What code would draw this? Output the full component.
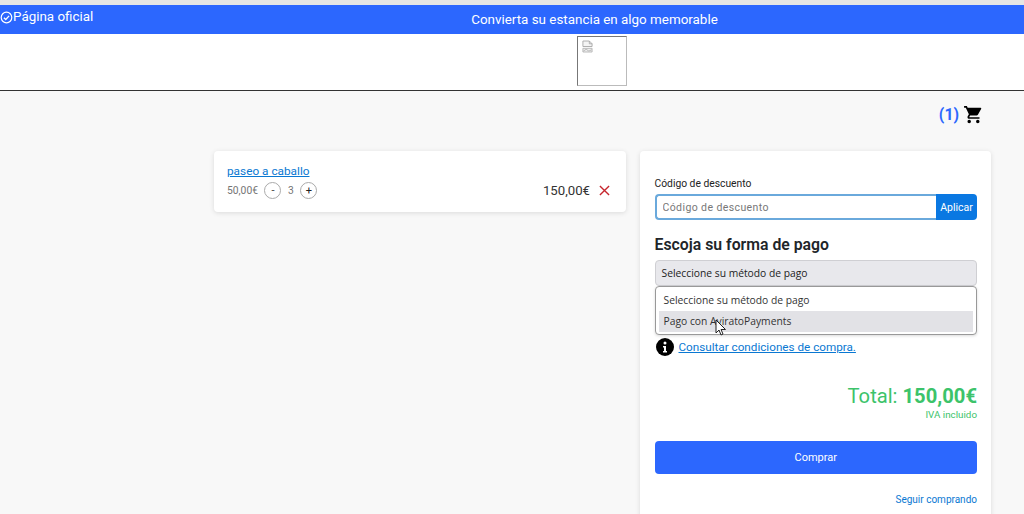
<script>
</script>

<div class="page">
  <div class="strip"></div>
  <div class="promo">
    <div class="official">
      <svg class="check" viewBox="0 0 14 14" width="13" height="13"><circle cx="7" cy="7" r="5.7" fill="none" stroke="#fff" stroke-width="1.3"/><path d="M4.2 7.2l2 2 3.6-4" fill="none" stroke="#fff" stroke-width="1.4"/></svg>
      <span>Página oficial</span>
    </div>
    <div class="slogan">Convierta su estancia en algo memorable</div>
  </div>
  <header class="head">
    <div class="logo">
      <svg viewBox="0 0 12 14" width="11" height="13"><path d="M1 1h7l3 3v3H1zM8 1v3h3" fill="#f4f4f4" stroke="#a9a9a9" stroke-width="1"/><path d="M1 9h10v4H1z" fill="#eee" stroke="#b5b5b5" stroke-width="1"/><path d="M1.500 12l3-2 3 2 3-1.500" fill="none" stroke="#b5b5b5"/></svg>
    </div>
  </header>
  <div class="cartbar">
    <span class="count">(1)</span>
    <svg viewBox="1 2 22 21" width="19" height="18"><path fill="#000" d="M7 18c-1.100 0-1.990.9-1.990 2S5.900 22 7 22s2-.9 2-2-.9-2-2-2zM1 2v2h2l3.600 7.590-1.350 2.450c-.16.280-.25.610-.25.960 0 1.100.9 2 2 2h12v-2H7.420c-.14 0-.25-.11-.25-.25l.03-.12.900-1.630h7.450c.750 0 1.410-.41 1.750-1.030l3.580-6.490A1 1 0 0 0 20 4H5.210l-.94-2H1zm16 16c-1.100 0-1.990.9-1.990 2s.89 2 1.990 2 2-.9 2-2-.9-2-2-2z"/></svg>
  </div>
  <main class="content">
    <section class="item card">
      <div class="item-left">
        <a href="#a" class="name">paseo a caballo</a>
        <div class="qty">
          <span>50,00€</span>
          <span class="round">-</span>
          <span>3</span>
          <span class="round plus">+</span>
        </div>
      </div>
      <div class="item-right">
        <span class="price">150,00€</span>
        <svg viewBox="0 0 12 12" width="11" height="11"><path d="M1 1l10 10M11 1L1 11" stroke="#c6262e" stroke-width="1.500" fill="none"/></svg>
      </div>
    </section>
    <aside class="summary card">
      <label class="lbl" for="dc">Código de descuento</label>
      <div class="coupon">
        <input id="dc" placeholder="Código de descuento" />
        <button class="apply">Aplicar</button>
      </div>
      <h2>Escoja su forma de pago</h2>
      <div class="select">Seleccione su método de pago</div>
      <div class="menu">
        <div class="opt">Seleccione su método de pago</div>
        <div class="opt hot">Pago con AviratoPayments</div>
        <svg class="cursor" viewBox="0 0 12 18" width="12" height="18"><path d="M1 1v13l3-3 2 5 2-1-2-4.500h4.500z" fill="#fff" stroke="#222" stroke-width="1"/></svg>
      </div>
      <div class="terms">
        <svg viewBox="0 0 18 18" width="18" height="18"><circle cx="9" cy="9" r="9" fill="#000"/><circle cx="9" cy="5" r="1.500" fill="#fff"/><path d="M7 8h3v5h1v1.500H7V13h1V9.500H7z" fill="#fff"/></svg>
        <a href="#b">Consultar condiciones de compra.</a>
      </div>
      <div class="total">Total: <b>150,00€</b></div>
      <div class="iva">IVA incluido</div>
      <button class="buy">Comprar</button>
      <a class="more" href="#c">Seguir comprando</a>
    </aside>
  </main>
</div>

<style>
  :global(body) { margin: 0; background: #f8f8f8; }
  .page { height: 514px; overflow: hidden; font-family: Roboto, "Liberation Sans", sans-serif; color: #212529; }
  .strip { height: 5px; background: #e6e6e4; }
  .promo { height: 29px; background: #2c67fe; color: #fff; font-size: 13.4px; display: flex; align-items: center; justify-content: center; position: relative; }
  .official { position: absolute; left: 0; top: 4px; display: flex; align-items: center; line-height: 16px; }
  .check { flex: none; }
  .slogan { padding-left: 165px; padding-bottom: 1px; }
  .head { height: 56px; background: #fff; border-bottom: 1px solid #333; display: flex; justify-content: center; box-sizing: content-box; }
  .logo { width: 44px; height: 45px; margin: 2px 0 0 180px; border: 1px solid; border-color: #777 #bbb #bbb #777; padding: 3px 0 0 4px; box-sizing: content-box; }
  .logo svg { display: block; }
  .cartbar { height: 47px; display: flex; justify-content: flex-end; align-items: center; gap: 5px; padding: 0 41px 0 0; box-sizing: border-box; }
  .count { color: #2c67fe; font-size: 15.800px; font-weight: 700; }
  .content { display: flex; align-items: flex-start; gap: 14px; padding-left: 214px; padding-top: 13px; }
  .card { background: #fff; border-radius: 4px; box-shadow: 0 1px 5px rgba(0,0,0,.12); box-sizing: border-box; }
  .item { width: 412px; height: 61px; padding: 13px 16px 0 13px; display: flex; justify-content: space-between; }
  .name { color: #0a78d2; font-size: 11.800px; line-height: 15px; display: block; }
  .qty { display: flex; align-items: center; gap: 6.500px; margin-top: 2px; font-size: 10.300px; color: #757575; height: 18px; }
  .round { width: 17px; height: 17px; border: 1px solid #aaa; border-radius: 50%; display: flex; align-items: center; justify-content: center; color: #444; font-size: 11px; box-sizing: border-box; }
  .plus { color: #222; }
  .item-right { display: flex; align-items: center; gap: 9px; margin-top: 16px; height: 20px; }
  .price { font-size: 13.200px; color: #333; }
  .summary { width: 351px; height: 380px; padding: 26px 14px 0 14.500px; }
  .lbl { display: block; font-size: 10.300px; line-height: 13px; color: #222; }
  .coupon { display: flex; height: 26px; margin-top: 4px; }
  input { flex: 1; min-width: 0; border: 2px solid #6aa9dc; border-right: 0; border-radius: 4px 0 0 4px; padding: 0 6px; font: 10.500px Roboto, sans-serif; letter-spacing: .4px; outline: none; box-sizing: border-box; }
  input::placeholder { color: #777; opacity: 1; }
  .apply { width: 41px; border: 0; background: #0a78e2; color: #fff; font: 10.500px Roboto, sans-serif; border-radius: 0 4px 4px 0; padding: 0; }
  h2 { font-size: 15.800px; line-height: 20px; font-weight: 600; margin: 15px 0 5px; color: #212529; }
  .select { height: 26px; background: #e8e8ec; border: 1px solid #cfcfd3; border-radius: 4px; box-sizing: border-box; padding-left: 6px; font: 10.300px/24px "Open Sans", sans-serif; color: #222; }
  .menu { position: relative; height: 49px; border: 1px solid #999; border-radius: 4px; background: #fff; box-sizing: border-box; padding: 3px 3px 0; box-shadow: 0 1px 3px rgba(0,0,0,.15); font: 10.300px "Open Sans", sans-serif; color: #333; }
  .opt { height: 21px; line-height: 21px; padding-left: 5px; }
  .opt.hot { background: #e2e2e6; }
  .cursor { position: absolute; left: 59px; top: 32px; }
  .terms { display: flex; align-items: center; gap: 5px; margin: 3px 0 0 1px; height: 18px; font-size: 11.700px; }
  .terms a { color: #0a78d2; }
  .total { text-align: right; margin-top: 28px; font-size: 20.200px; line-height: 24px; color: #3cc36a; }
  .total b { font-weight: 700; }
  .iva { text-align: right; font-size: 9.800px; line-height: 12px; color: #3cc36a; padding-top: 1px; }
  .buy { display: block; width: 100%; height: 33px; margin-top: 20px; border: 0; border-radius: 4px; background: #2c67fe; color: #fff; font: 11px Roboto, sans-serif; padding-top: 1px; }
  .more { display: block; text-align: right; margin-top: 20px; font-size: 10px; line-height: 12px; color: #0a78d2; text-decoration: none; }
</style>
